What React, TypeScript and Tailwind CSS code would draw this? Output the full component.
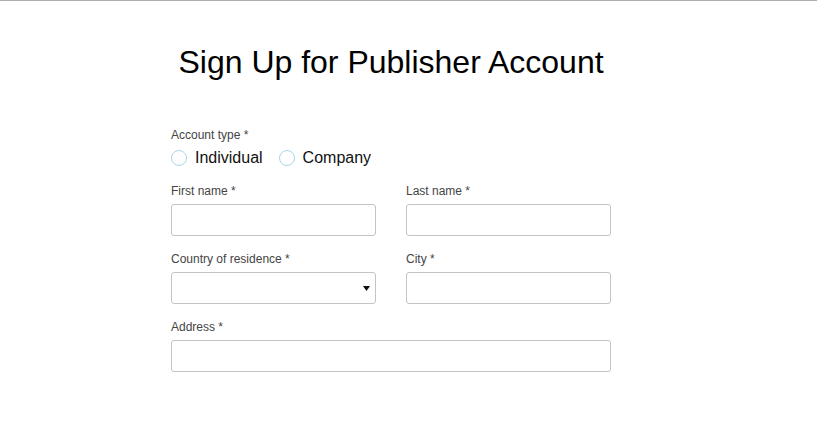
import React from "react";

function Field({ label, select = false }: { label: string; select?: boolean }) {
  return (
    <div className="flex flex-col">
      <label className="text-[12px] leading-[17px] text-[#444] mb-[4px]">{label}</label>
      <div className="relative h-[32px] border border-[#c4c4c4] rounded-[3px] bg-white">
        {select && (
          <svg
            className="absolute right-[5px] top-[13px]"
            width="7"
            height="5"
            viewBox="0 0 7 5"
          >
            <polygon points="0,0 7,0 3.5,5" fill="#111" />
          </svg>
        )}
      </div>
    </div>
  );
}

function Radio({ label }: { label: string }) {
  return (
    <div className="flex items-center">
      <span className="w-[16px] h-[16px] rounded-full border border-[#a9d6e8] bg-white" />
      <span className="ml-[8px] text-[16px] leading-[20px] text-[#111]">{label}</span>
    </div>
  );
}

export default function App() {
  return (
    <div
      className="w-[817px] h-[427px] bg-white border-t border-[#adadad]"
      style={{ fontFamily: '"Liberation Sans", Arial, sans-serif' }}
    >
      <div className="ml-[171px] w-[440px] pt-[43px]">
        <h1 className="text-[32px] leading-[36px] text-black text-center font-normal">
          Sign Up for Publisher Account
        </h1>
        <div className="mt-[47px] flex flex-col">
          <label className="text-[12px] leading-[17px] text-[#444]">Account type *</label>
          <div className="mt-[4px] flex gap-[16px]">
            <Radio label="Individual" />
            <Radio label="Company" />
          </div>
        </div>
        <div className="mt-[15px] grid grid-cols-2 gap-x-[30px] gap-y-[15px]">
          <Field label="First name *" />
          <Field label="Last name *" />
          <Field label="Country of residence *" select />
          <Field label="City *" />
          <div className="col-span-2">
            <Field label="Address *" />
          </div>
        </div>
      </div>
    </div>
  );
}
